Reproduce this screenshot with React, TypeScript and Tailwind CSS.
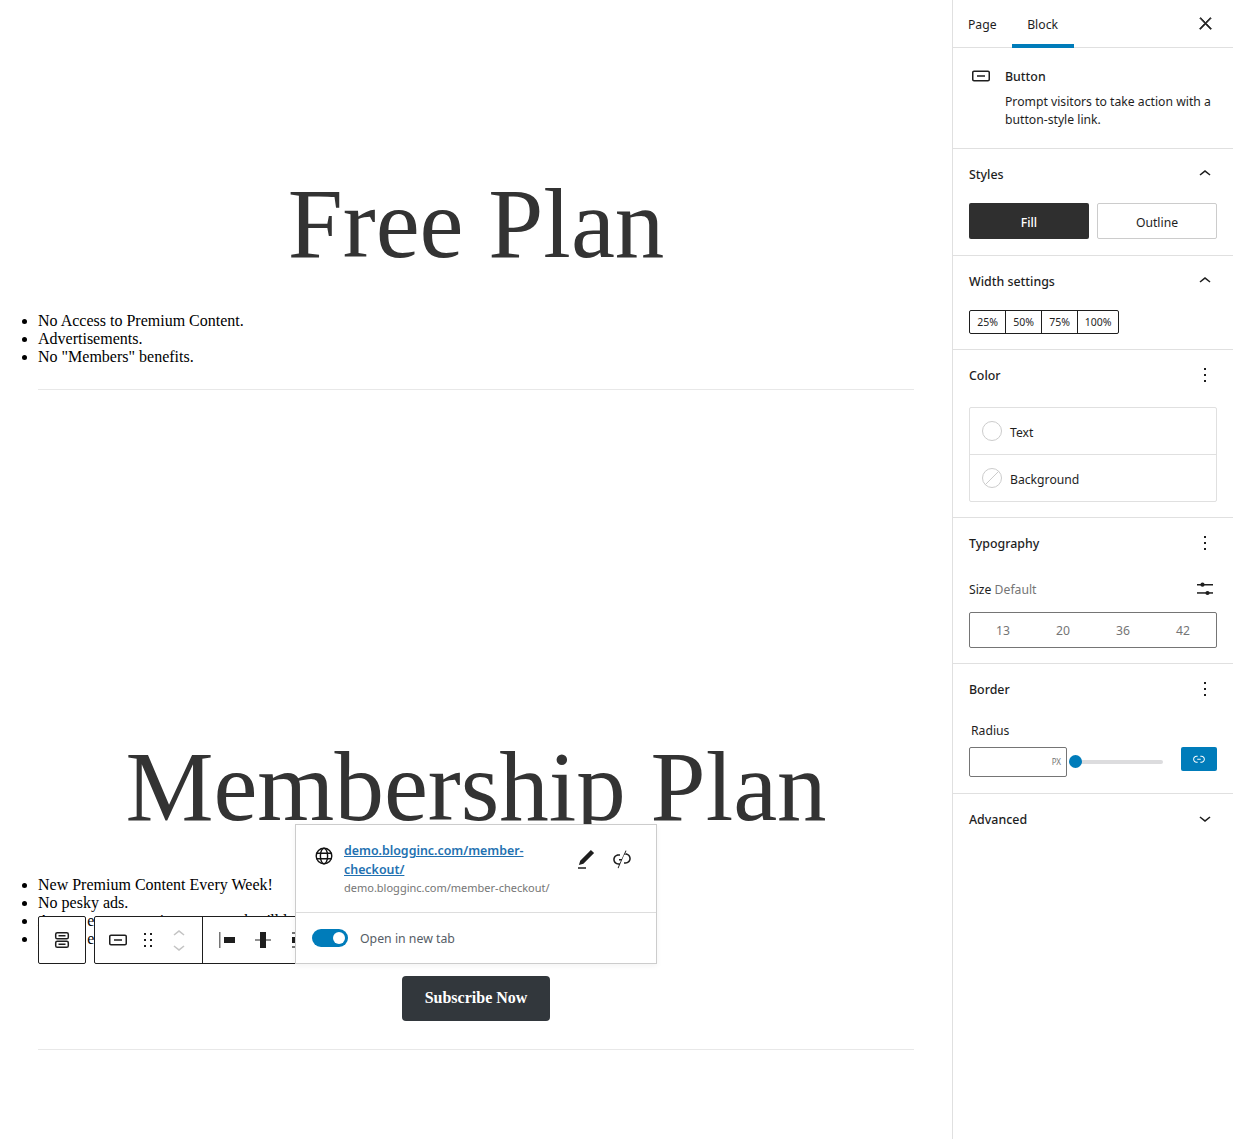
import React from "react";

const I = ({ d, size = 24, className = "" }: { d: string; size?: number; className?: string }) => (
  <svg width={size} height={size} viewBox="0 0 24 24" fill="currentColor" className={`shrink-0 ${className}`}>
    <path d={d} />
  </svg>
);

const ic = {
  close: "M13 11.8l6.1-6.3-1-1-6.1 6.2-6.1-6.2-1 1 6.1 6.3-6.5 6.7 1 1 6.5-6.6 6.5 6.6 1-1z",
  button: "M19 6.5H5c-1.1 0-2 .9-2 2v7c0 1.1.9 2 2 2h14c1.1 0 2-.9 2-2v-7c0-1.1-.9-2-2-2zm.5 9c0 .3-.2.5-.5.5H5c-.3 0-.5-.2-.5-.5v-7c0-.3.2-.5.5-.5h14c.3 0 .5.2.5.5v7zM8 12.8h8v-1.5H8v1.5z",
  up: "M6.5 12.4L12 8l5.5 4.4-.9 1.2L12 10l-4.5 3.6-1-1.2z",
  down: "M17.5 11.6L12 16l-5.5-4.4.9-1.2L12 14l4.5-3.6 1 1.2z",
  more: "M13 19h-2v-2h2v2zm0-6h-2v-2h2v2zm0-6h-2V5h2v2z",
  link: "M15.6 7.2H14v1.5h1.6c2 0 3.7 1.7 3.7 3.7s-1.7 3.7-3.7 3.7H14v1.5h1.6c2.8 0 5.2-2.3 5.2-5.2 0-2.9-2.3-5.2-5.2-5.2zM4.7 12.4c0-2 1.7-3.7 3.7-3.7H10V7.2H8.4c-2.9 0-5.2 2.3-5.2 5.2 0 2.9 2.3 5.2 5.2 5.2H10v-1.5H8.4c-2 0-3.7-1.7-3.7-3.7zm4.6.9h5.3v-1.5H9.3v1.5z",
  unlink: "M15.6 7.3h-.7l1.6-3.5-.9-.4-3.9 8.5H9v1.5h2l-1.3 2.8H8.4c-2 0-3.7-1.7-3.7-3.7s1.7-3.7 3.7-3.7H10V7.3H8.4c-2.9 0-5.2 2.3-5.2 5.2 0 2.9 2.3 5.2 5.2 5.2H9l-1.4 3.2.9.4 5.7-13.5h1.4c2 0 3.7 1.7 3.7 3.7s-1.7 3.7-3.7 3.7H14v1.5h1.6c2.9 0 5.2-2.3 5.2-5.2 0-2.9-2.4-5.2-5.2-5.2z",
  edit: "M20.1 5.1L16.9 2 6.2 12.7l-1.3 4.4 4.5-1.3L20.1 5.1zM4 20.8h8v-1.5H4v1.5z",
  drag: "M8 7h2V5H8v2zm0 6h2v-2H8v2zm0 6h2v-2H8v2zm6-14v2h2V5h-2zm0 8h2v-2h-2v2zm0 6h2v-2h-2v2z",
};

const Globe = () => (
  <svg width="18" height="18" viewBox="0 0 18 18" fill="none" stroke="currentColor" strokeWidth="1.4" className="shrink-0">
    <circle cx="9" cy="9" r="7.8" />
    <ellipse cx="9" cy="9" rx="3.6" ry="7.8" />
    <path d="M1.5 6.3h15M1.5 11.7h15" />
  </svg>
);

const Stack = () => (
  <svg width="24" height="24" viewBox="0 0 24 24" fill="none" stroke="currentColor" strokeWidth="1.5">
    <rect x="5.7" y="4.7" width="12.6" height="6.1" rx="1.6" />
    <rect x="5.7" y="13.2" width="12.6" height="6.1" rx="1.6" />
    <path d="M8.5 7.8h7M8.5 16.2h7" />
  </svg>
);

const Sliders = () => (
  <svg width="18" height="16" viewBox="0 0 18 16" fill="currentColor" className="mr-[2px] -translate-y-[1px]">
    <rect x="0" y="3" width="16" height="1.5" />
    <rect x="0" y="11.2" width="16" height="1.5" />
    <circle cx="5.5" cy="3.7" r="2.1" />
    <circle cx="10.5" cy="12" r="2.1" />
  </svg>
);

const Section = ({ title, icon, children, className = "" }: { title: string; icon: string; children?: React.ReactNode; className?: string }) => (
  <section className={`border-b border-[#e0e0e0] px-4 pt-4 ${className}`}>
    <div className="flex h-5 items-center justify-between">
      <span className="text-[12.4px] font-medium text-[#1e1e1e]">{title}</span>
      <I d={ic[icon as keyof typeof ic]} className="-translate-y-[1px]" />
    </div>
    {children}
  </section>
);

export default function App() {
  return (
    <div className="flex h-[1139px] w-[1233px] overflow-hidden bg-white">
      <main className="relative w-[952px] shrink-0 pl-[38px] pr-[38px] pt-[169px] font-['Liberation_Serif',serif] text-black">
        <h1 className="text-center text-[99px] leading-[110px] font-normal text-[#333]">Free Plan</h1>
        <ul className="mt-[33px] list-disc pl-0 text-[16px] leading-[18px]">
          <li>No Access to Premium Content.</li>
          <li>Advertisements.</li>
          <li>No "Members" benefits.</li>
        </ul>
        <hr className="mt-[23px] border-0 border-t border-[#e8e8e8]" />
        <h1 className="mt-[342px] text-center text-[99px] leading-[110px] font-normal text-[#333]">Membership Plan</h1>
        <ul className="mt-[34px] list-disc pl-0 text-[16px] leading-[18px]">
          <li>New Premium Content Every Week!</li>
          <li>No pesky ads.</li>
          <li>Access every premium content they'll love.</li>
          <li>Access exclusive member perks.</li>
        </ul>
        <div className="mt-[28px] flex justify-center">
          <a className="flex h-[45px] w-[148px] items-center justify-center rounded-[4px] bg-[#32373c] pb-[2px] text-[16px] font-bold text-white">Subscribe Now</a>
        </div>
        <hr className="mt-[28px] border-0 border-t border-[#e8e8e8]" />

        <div className="absolute left-[38px] top-[916px] flex h-[48px] w-[48px] items-center justify-center rounded-[2px] border border-[#1e1e1e] bg-white text-[#1e1e1e]">
          <Stack />
        </div>
        <div className="absolute left-[94px] top-[916px] flex h-[48px] w-[210px] items-center rounded-[2px] border border-[#1e1e1e] bg-white text-[#1e1e1e]">
          <div className="flex h-full w-[108px] shrink-0 items-center border-r border-[#1e1e1e]">
            <I d={ic.button} className="ml-[11px]" />
            <I d={ic.drag} className="ml-[6px]" />
            <div className="ml-[7px] flex flex-col text-[#c4c4c4]">
              <I d={ic.up} />
              <I d={ic.down} className="-mt-[11px]" />
            </div>
          </div>
          <svg width="24" height="24" viewBox="0 0 24 24" className="ml-[12px] shrink-0">
            <path d="M4 4h1.5v16H4z" fill="#757575" />
            <path d="M9 9h11v6H9z" fill="#1e1e1e" />
          </svg>
          <svg width="24" height="24" viewBox="0 0 24 24" className="ml-[12px] shrink-0">
            <path d="M4 11.2h16v1.6H4z" fill="#757575" />
            <path d="M9 4h6v16H9z" fill="#1e1e1e" />
          </svg>
          <svg width="24" height="24" viewBox="0 0 24 24" className="ml-[12px] shrink-0">
            <path d="M5 4h6v2H5zM5 18h6v2H5z" fill="#757575" />
            <path d="M5 9h12v6H5z" fill="#1e1e1e" />
          </svg>
        </div>

        <div className="absolute left-[295px] top-[824px] w-[362px] border border-[#ccc] bg-white font-['Noto_Sans',sans-serif] shadow-[0_2px_6px_rgba(0,0,0,0.05)]">
          <div className="flex h-[88px] border-b border-[#ddd]">
            <div className="ml-[19px] mt-[22px] text-[#111]"><Globe /></div>
            <div className="ml-[11px] mt-[16px] w-[222px] whitespace-nowrap text-[12.4px] leading-[19px]">
              <a className="font-semibold text-[#2271b1] underline">demo.blogginc.com/member-<br />checkout/</a>
              <div className="text-[11px] leading-[18px] text-[#757575]">demo.blogginc.com/member-checkout/</div>
            </div>
            <I d={ic.edit} className="ml-[8px] mt-[23px] text-[#1e1e1e]" />
            <I d={ic.unlink} className="ml-[12px] mt-[22px] text-[#1e1e1e]" />
          </div>
          <div className="flex h-[50px] items-center">
            <div className="relative ml-[16px] h-[18px] w-[36px] rounded-full bg-[#007cba]">
              <span className="absolute right-[3px] top-[3px] h-3 w-3 rounded-full bg-white" />
            </div>
            <span className="ml-3 pt-[2px] text-[12.3px] text-[#555d66]">Open in new tab</span>
          </div>
        </div>
      </main>

      <aside className="w-[281px] shrink-0 border-l border-[#e0e0e0] font-['Noto_Sans',sans-serif] text-[12.2px] text-[#1e1e1e]">
        <div className="flex h-[48px] items-stretch border-b border-[#e0e0e0]">
          <span className="ml-[15px] flex items-center pt-[3px]">Page</span>
          <span className="relative ml-[15px] flex w-[62px] items-center justify-center pt-[3px]">
            Block
            <span className="absolute inset-x-0 -bottom-[1px] h-[4px] bg-[#007cba]" />
          </span>
          <I d={ic.close} className="ml-auto mr-[18px] mt-[14px] stroke-current stroke-[1px] text-[#1e1e1e]" size={19} />
        </div>

        <div className="flex h-[101px] border-b border-[#e0e0e0] pl-4 pt-[16px]">
          <I d={ic.button} />
          <div className="ml-3">
            <div className="mt-[3px] text-[12.4px] font-medium leading-[20px]">Button</div>
            <p className="mt-[6px] w-[215px] leading-[18px]">Prompt visitors to take action with a button-style link.</p>
          </div>
        </div>

        <Section title="Styles" icon="up" className="h-[107px]">
          <div className="mt-[18px] flex gap-2">
            <div className="flex h-9 w-[120px] items-center justify-center rounded-[2px] bg-[#2f2f2f] pt-[4px] font-medium text-white">Fill</div>
            <div className="flex h-9 w-[120px] items-center justify-center rounded-[2px] border border-[#ccc] pt-[4px]">Outline</div>
          </div>
        </Section>

        <Section title="Width settings" icon="up" className="h-[94px]">
          <div className="mt-[18px] flex h-6 w-[150px] rounded-[2px] border border-[#1e1e1e] text-[10.5px]">
            <span className="flex w-9 items-center justify-center border-r border-[#1e1e1e] pt-[1px]">25%</span>
            <span className="flex w-9 items-center justify-center border-r border-[#1e1e1e] pt-[1px]">50%</span>
            <span className="flex w-9 items-center justify-center border-r border-[#1e1e1e] pt-[1px]">75%</span>
            <span className="flex flex-1 items-center justify-center pt-[1px]">100%</span>
          </div>
        </Section>

        <Section title="Color" icon="more" className="h-[168px]">
          <div className="mt-[21px] h-[95px] rounded-[2px] border border-[#e0e0e0]">
            <div className="flex h-[47px] items-center border-b border-[#e0e0e0] pl-3">
              <span className="h-5 w-5 rounded-full border border-[#ccc]" />
              <span className="ml-2 pt-[4px]">Text</span>
            </div>
            <div className="flex h-[46px] items-center pl-3">
              <svg width="20" height="20" viewBox="0 0 20 20" fill="none" stroke="#ccc"><circle cx="10" cy="10" r="9.5" /><path d="M3.3 16.7L16.7 3.3" /></svg>
              <span className="ml-2 pt-[4px]">Background</span>
            </div>
          </div>
        </Section>

        <Section title="Typography" icon="more" className="h-[146px]">
          <div className="mt-[26px] flex h-5 items-center justify-between">
            <span>Size <span className="text-[#757575]">Default</span></span>
            <Sliders />
          </div>
          <div className="mt-[12px] grid h-9 grid-cols-4 rounded-[2px] border border-[#757575] px-[3px] pt-[2px] text-[#757575]">
            {["13", "20", "36", "42"].map((n) => (
              <span key={n} className="flex items-center justify-center">{n}</span>
            ))}
          </div>
        </Section>

        <Section title="Border" icon="more" className="h-[130px]">
          <div className="ml-[2px] mt-[21px] leading-5">Radius</div>
          <div className="mt-[6px] flex items-start">
            <div className="flex h-[30px] w-[98px] items-center justify-end rounded-[2px] border border-[#757575] pr-[5px] text-[8px] text-[#757575]">PX</div>
            <div className="relative ml-[3px] mt-[13px] h-1 w-[93px] rounded-full bg-[#dcdcde]">
              <span className="absolute -top-[5px] -left-[1px] h-[13px] w-[13px] rounded-full bg-[#007cba]" />
            </div>
            <div className="ml-[18px] flex h-6 w-9 items-center justify-center rounded-[2px] bg-[#007cba] text-white">
              <I d={ic.link} size={16} />
            </div>
          </div>
        </Section>

        <div className="flex h-[52px] items-center justify-between px-4">
          <span className="text-[12.4px] font-medium">Advanced</span>
          <I d={ic.down} className="-translate-y-[2px]" />
        </div>
      </aside>
    </div>
  );
}
